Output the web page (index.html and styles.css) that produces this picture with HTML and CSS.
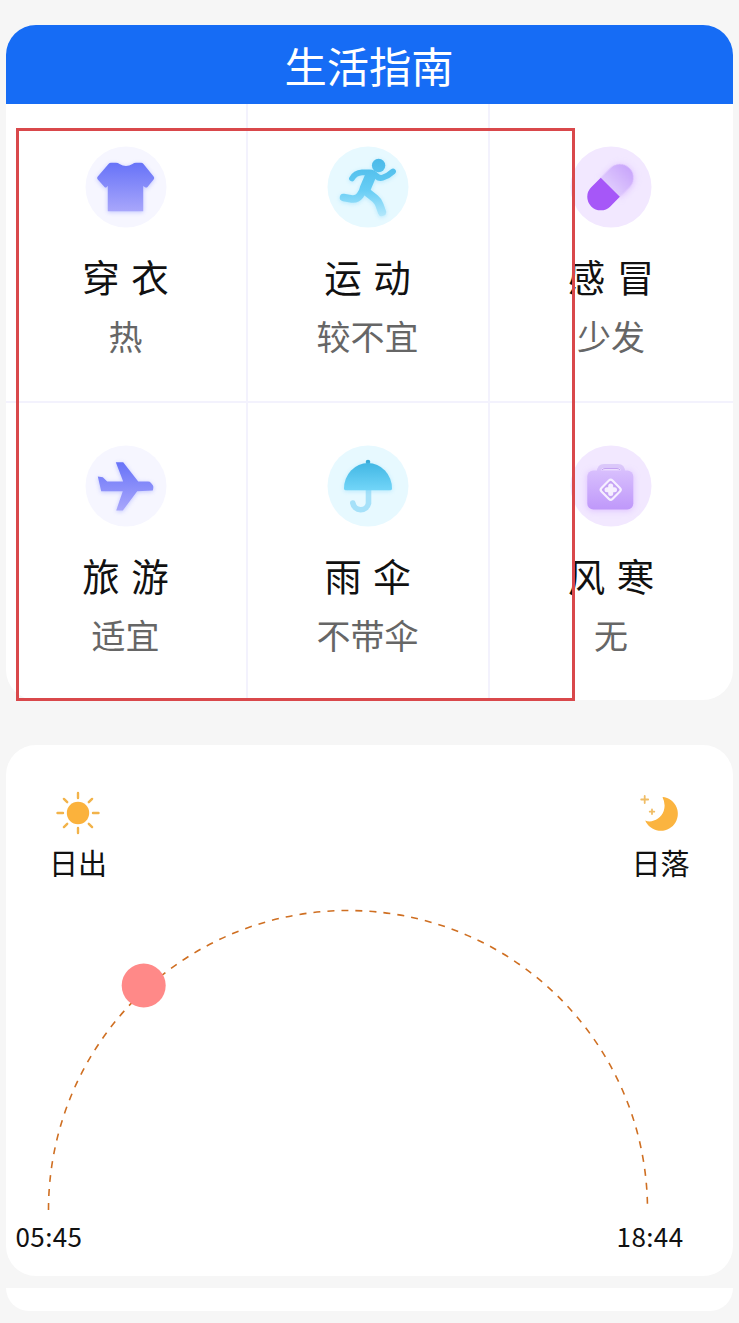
FILE: index.html
```html
<!DOCTYPE html>
<html lang="zh-CN">
<head>
  <meta charset="UTF-8">
  <title>生活指南</title>
  <link rel="stylesheet" href="styles.css">
</head>
<body>

<div class="card guide">
  <h1 class="guide-title">生活指南</h1>
  <div class="guide-grid">
    <div class="item">
      <svg class="icon" viewBox="0 0 82 82">
        <defs>
          <linearGradient id="blue" gradientUnits="userSpaceOnUse" x1="0" y1="16" x2="0" y2="66">
            <stop offset="0" stop-color="#6672f8"/>
            <stop offset="1" stop-color="#a9a7fb"/>
          </linearGradient>
        </defs>
        <circle cx="41" cy="41" r="40.5" fill="#f6f6ff"/>
        <path class="blue-shadow" fill="url(#blue)" d="M26 16.7H31Q33 16.7 34.5 18Q41 22 47.5 18Q49 16.7 51 16.7H56Q57.5 16.7 58.5 18L68.6 30.5Q69.7 32 68.6 33.6L62.5 41Q61.5 42 60 41.2L58.2 40V65.3H22.8V40L21.5 41.2Q20.5 42 19.5 41L12.8 33.6Q11.5 32 12.8 30.5L23.5 18Q24.5 16.7 26 16.7Z"/>
      </svg>
      <div class="name">穿 衣</div>
      <div class="value">热</div>
    </div>
    <div class="item">
      <svg class="icon" viewBox="0 0 82 82">
        <defs>
          <linearGradient id="cyan" gradientUnits="userSpaceOnUse" x1="0" y1="12" x2="0" y2="70">
            <stop offset="0" stop-color="#4ab9e8"/>
            <stop offset="0.55" stop-color="#66cdf5"/>
            <stop offset="1" stop-color="#b2e7fb"/>
          </linearGradient>
        </defs>
        <circle cx="41" cy="41" r="40.5" fill="#e7f9ff"/>
        <g class="cyan-shadow">
          <circle cx="51.6" cy="19.5" r="6.7" fill="url(#cyan)"/>
          <g fill="none" stroke="url(#cyan)" stroke-linecap="round" stroke-linejoin="round">
            <path stroke-width="5.8" d="M25 32.5Q28 26.8 35 26.3H43Q46 26.3 49 29.5Q52 33 56 31.5Q61 30 66 25.500"/>
            <path stroke-width="11" d="M43.5 30L38 43"/>
            <path stroke-width="7.5" d="M37 43L33 49.5Q30 53.5 25 53L16.5 51.5"/>
            <path stroke-width="8.2" d="M38.5 45L48 52.5Q51 55 52.5 59L55 66"/>
          </g>
        </g>
      </svg>
      <div class="name">运 动</div>
      <div class="value">较不宜</div>
    </div>
    <div class="item">
      <svg class="icon" viewBox="0 0 82 82">
        <defs>
          <linearGradient id="pill" x1="1" y1="0" x2="0" y2="0">
            <stop offset="0" stop-color="#c9a6fb"/>
            <stop offset="1" stop-color="#dec9fd"/>
          </linearGradient>
        </defs>
        <circle cx="41" cy="41" r="40.5" fill="#f2e8ff"/>
        <g transform="translate(40.3 41.3) rotate(-45)">
          <path class="purple-shadow" fill="url(#pill)" d="M0 -13.5H13.5A13.5 13.5 0 0 1 13.5 13.5H0Z"/>
          <path fill="#a657f8" d="M0 -13.5H-13.5A13.5 13.5 0 0 0 -13.5 13.5H0Z"/>
        </g>
      </svg>
      <div class="name">感 冒</div>
      <div class="value">少发</div>
    </div>
    <div class="item">
      <svg class="icon" viewBox="0 0 82 82">
        <circle cx="41" cy="41" r="40.5" fill="#f6f6ff"/>
        <path class="blue-shadow" fill="url(#blue)" d="M30.8 17.2H38.2L53.2 36.6H63Q65 36.6 66 38L68 40.5Q68.5 41.5 68.3 43L67.8 45.6L52.2 46.2L37.8 65.6H31.2L37.8 46.2H16.2L12.8 31.6L17.8 32.2L22.2 36.6H38.2Z"/>
      </svg>
      <div class="name">旅 游</div>
      <div class="value">适宜</div>
    </div>
    <div class="item">
      <svg class="icon" viewBox="0 0 82 82">
        <defs>
          <linearGradient id="dome" x1="0" y1="0" x2="0" y2="1">
            <stop offset="0" stop-color="#42b7e4"/>
            <stop offset="1" stop-color="#72d5f8"/>
          </linearGradient>
        </defs>
        <circle cx="41" cy="41" r="40.5" fill="#e7f9ff"/>
        <path fill="none" stroke="#a6e1f9" stroke-width="5.6" stroke-linecap="round" d="M41.5 45V58.500A8 8 0 0 1 25.800 58"/>
        <circle cx="41" cy="17" r="2.3" fill="#38a9d6"/>
        <path class="cyan-shadow" fill="url(#dome)" d="M17 43.5A24 25.5 0 0 1 65 43.5Q65 45.2 63.5 45.2H18.5Q17 45.2 17 43.5Z"/>
      </svg>
      <div class="name">雨 伞</div>
      <div class="value">不带伞</div>
    </div>
    <div class="item">
      <svg class="icon" viewBox="0 0 82 82">
        <defs>
          <linearGradient id="kit" x1="0" y1="0" x2="0" y2="1">
            <stop offset="0" stop-color="#d8bffd"/>
            <stop offset="1" stop-color="#bf98fa"/>
          </linearGradient>
        </defs>
        <circle cx="41" cy="41" r="40.5" fill="#f2e8ff"/>
        <path fill="none" stroke="#dccafa" stroke-width="4" d="M29 27Q29 21 34 21H48Q53 21 53 27"/>
        <path fill="none" stroke="#c3a3f0" stroke-width="1" d="M32 25Q33 23.5 35 23.5H47Q49 23.5 50 25"/>
        <rect class="purple-shadow" x="17.3" y="25.4" width="46" height="39" rx="6" fill="url(#kit)"/>
        <rect x="33" y="37" width="15.5" height="15.5" rx="2.5" transform="rotate(45 40.7 44.7)" fill="#c5a2f5" stroke="#f6efff" stroke-width="2.200"/>
        <path fill="none" stroke="#f6efff" stroke-width="5" stroke-linecap="round" d="M40.7 41V48.5M37 44.7H44.5"/>
      </svg>
      <div class="name">风 寒</div>
      <div class="value">无</div>
    </div>
  </div>
</div>

<div class="card sun">
  <div class="sun-head">
    <div class="sun-item">
      <svg class="sun-icon" viewBox="0 0 44 44">
        <circle cx="22" cy="22" r="11.2" fill="#fbb23c"/>
        <path stroke="#f2b34a" stroke-width="2.4" stroke-linecap="round" d="M22 2V7M22 37V42M1.500 22H7M37 22H42.500M7.900 7.900L11.200 11.200M32.800 32.800L36.100 36.100M36.100 7.900L32.800 11.200M11.200 32.800L7.900 36.100"/>
      </svg>
      <span>日出</span>
    </div>
    <div class="sun-item">
      <svg class="sun-icon" viewBox="0 0 44 44">
        <path fill="#fbb440" d="M25.5 6A17 17 0 1 1 7.2 29.5C14 32.500 23 27.500 25.700 20Q28 13 24.500 6.200Z"/>
        <path fill="none" stroke="#f0bd66" stroke-width="1.8" stroke-linecap="round" d="M6.7 5V12M3.2 8.5H10.2M14 18.5V23M11.7 20.7H16.3"/>
      </svg>
      <span>日落</span>
    </div>
  </div>
  <svg class="arc" viewBox="0 0 727 320">
    <path fill="none" stroke="#cf6f22" stroke-width="1.6" stroke-dasharray="7 7.05" d="M42.5 310A299.5 299.5 0 0 1 641.5 310"/>
    <circle cx="137.7" cy="85.5" r="22" fill="#ff8988"/>
  </svg>
  <div class="times">
    <span>05:45</span>
    <span>18:44</span>
  </div>
</div>

<div class="card next"></div>

<div class="marker"></div>

</body>
</html>
```

FILE: styles.css
```css
* {
  box-sizing: border-box;
}

body {
  position: relative;
  margin: 0;
  padding: 25px 6.5px 0 5.5px;
  height: 1323px;
  overflow: hidden;
  background-color: #f6f6f6;
  font-family: "Noto Sans CJK SC", sans-serif;
  color: #111;
}

svg {
  display: block;
}

.card {
  background-color: #fff;
  border-radius: 30px;
  overflow: hidden;
}

.guide {
  height: 675px;
}

.guide-title {
  margin: 0;
  height: 79px;
  line-height: 79px;
  text-align: center;
  font-size: 42.3px;
  font-weight: normal;
  color: #fff;
  background-color: #166cf5;
}

.guide-grid {
  display: grid;
  grid-template-columns: 242px 242px 1fr;
  grid-template-rows: 299px 297px;
}

.item {
  display: flex;
  flex-direction: column;
  align-items: center;
  padding-top: 42px;
  border-right: 2px solid #f3f2fd;
  border-bottom: 2px solid #f3f2fd;
}

.item:nth-child(3n) {
  border-right: none;
}

.item:nth-child(n+4) {
  border-bottom: none;
}

.icon {
  width: 82px;
  height: 82px;
}

.blue-shadow {
  filter: drop-shadow(0 1px 2px rgba(130, 140, 255, 0.45));
}

.cyan-shadow {
  filter: drop-shadow(0 1px 2px rgba(110, 210, 250, 0.4));
}

.purple-shadow {
  filter: drop-shadow(0 1px 3px rgba(200, 150, 255, 0.5));
}

.name {
  margin-top: 23px;
  line-height: 50px;
  font-size: 37.5px;
  word-spacing: 3px;
}

.value {
  margin-top: 12px;
  line-height: 46px;
  font-size: 34px;
  color: #666;
}

.sun {
  margin-top: 45px;
  height: 531px;
}

.sun-head {
  display: flex;
  justify-content: space-between;
  padding: 46px 43px 0 43.5px;
}

.sun-item {
  display: flex;
  flex-direction: column;
  align-items: center;
  gap: 9px;
  line-height: 36px;
  font-size: 29px;
}

.sun-icon {
  width: 44px;
  height: 44px;
}

.arc {
  width: 727px;
  height: 320px;
  margin-top: 20px;
}

.times {
  display: flex;
  justify-content: space-between;
  margin-top: -2px;
  padding: 0 49px 0 10px;
  line-height: 36px;
  font-size: 26px;
  letter-spacing: 0.4px;
}

.next {
  margin-top: 12px;
  height: 23px;
  border-radius: 0 0 28px 28px;
}

/* red frame over the guide items */
.marker {
  position: absolute;
  left: 16px;
  top: 128px;
  width: 559px;
  height: 573px;
  border: 3px solid #d9484b;
}
```
